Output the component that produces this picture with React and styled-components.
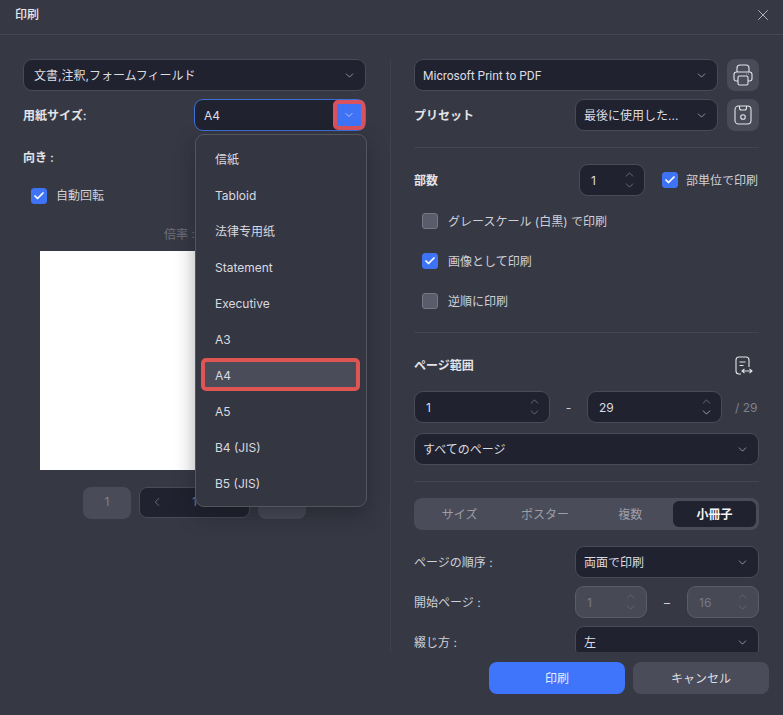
import React from "react";
import styled, { createGlobalStyle } from "styled-components";
import { ChevronDown, ChevronUp, ChevronLeft, Check, X } from "lucide-react";

const Global = createGlobalStyle`
  html, body { margin: 0; padding: 0; background: #363844; }
  *, *::before, *::after { box-sizing: border-box; }
`;

const Window = styled.div`
  width: 783px;
  height: 715px;
  display: flex;
  flex-direction: column;
  overflow: hidden;
  background: #363844;
  color: #d9dae0;
  font: 12px/1.4 Inter, "Noto Sans CJK JP", sans-serif;
`;
const Header = styled.header`
  height: 35px;
  flex: none;
  display: flex;
  align-items: center;
  justify-content: space-between;
  padding: 0 11px 4px 15px;
  border-bottom: 1px solid #454753;
`;
const Title = styled.h1`
  margin: 0;
  font-size: 12px;
  font-weight: 500;
  color: #e6e7ea;
`;
const Body = styled.div`
  flex: 1;
  min-height: 0;
  display: flex;
`;
const LeftPane = styled.section`
  position: relative;
  width: 390px;
  flex: none;
  padding: 24px 24px 0 23px;
`;
const RightPane = styled.section`
  flex: 1;
  min-width: 0;
  margin-top: 24px;
  padding: 0 24px 0 23px;
  border-left: 1px solid #3f414d;
  overflow: hidden;
`;
const Row = styled.div`
  display: flex;
  align-items: center;
  justify-content: space-between;
  gap: ${(p) => p.$gap ?? 9}px;
  margin-top: ${(p) => p.$top || 0}px;
`;
const RangeRow = styled.div`
  display: grid;
  grid-template-columns: 136px 37px 135px 1fr;
  align-items: center;
  justify-items: center;
  margin-top: 16px;
`;
const Group = styled.div`
  display: flex;
  align-items: center;
  gap: ${(p) => p.$gap || 9}px;
  padding-right: ${(p) => p.$pr || 0}px;
`;
const Label = styled.span`
  padding-top: 2px;
  font-weight: ${(p) => (p.$bold ? 600 : 400)};
  color: ${(p) => (p.$bold ? "#e3e4e8" : "#cfd0d6")};
`;
const Field = styled.div`
  height: 32px;
  flex: ${(p) => (p.$w ? "none" : 1)};
  width: ${(p) => (p.$w ? `${p.$w}px` : "auto")};
  display: flex;
  align-items: center;
  justify-content: space-between;
  padding: 0 ${(p) => (p.$active ? 1 : 9)}px 0 ${(p) => p.$pl || 8}px;
  border-radius: 9px;
  border: 1px solid ${(p) => (p.$active ? "#3e6fd8" : "#494b58")};
  background: #20222f;
  color: #dcdde2;
`;
const FieldText = styled.span`
  padding-top: 2px;
  font-family: ${(p) => (p.$latin ? "Roboto, sans-serif" : "inherit")};
`;
const Chevron = styled(ChevronDown)`
  color: #b4b5bd;
  flex: none;
`;
const ArrowButton = styled.div`
  width: 32px;
  height: 30px;
  margin-right: -1px;
  display: flex;
  align-items: center;
  justify-content: center;
  background: #3f73f6;
  border: 4px solid #d9525c;
  border-radius: 5px;
  color: #d7e2ff;
`;
const IconButton = styled.div`
  width: 32px;
  height: 32px;
  flex: none;
  display: flex;
  align-items: center;
  justify-content: center;
  border-radius: 8px;
  background: #494b58;
`;
const Check1 = styled.div`
  width: 16px;
  height: 16px;
  flex: none;
  display: flex;
  align-items: center;
  justify-content: center;
  border-radius: 3px;
  background: ${(p) => (p.$on ? "#3f73f6" : "#5a5c6b")};
  border: 1px solid ${(p) => (p.$on ? "#3f73f6" : "#767885")};
  color: #fff;
`;
const CheckRow = styled.label`
  height: 20px;
  display: flex;
  align-items: center;
  gap: ${(p) => p.$gap || 10}px;
  margin: ${(p) => p.$top || 0}px 0 0 ${(p) => p.$left ?? 8}px;
  color: #cfd0d6;
`;
const CheckText = styled.span`
  padding-top: 2px;
`;
const Divider = styled.hr`
  margin: ${(p) => p.$top || 16}px 0 0;
  border: 0;
  border-top: 1px solid #434551;
`;
const Spin = styled.div`
  height: 32px;
  width: ${(p) => (p.$w ? `${p.$w}px` : "auto")};
  flex: none;
  display: flex;
  align-items: center;
  justify-content: space-between;
  padding: 0 ${(p) => (p.$off ? 9 : 8)}px 0 11px;
  border-radius: 9px;
  border: 1px solid ${(p) => (p.$off ? "#5a5c69" : "#494b58")};
  background: ${(p) => (p.$off ? "#474955" : "#20222f")};
  color: ${(p) => (p.$off ? "#777985" : "#dcdde2")};
`;
const SpinArrows = styled.div`
  display: flex;
  flex-direction: column;
  color: ${(p) => (p.$off ? "#70727e" : "#8f909a")};
  svg { display: block; margin: -1px 0; }
  svg:last-child { color: ${(p) => (p.$hot ? "#e0e1e6" : "inherit")}; }
`;
const Muted = styled.span`
  justify-self: start;
  padding: 2px 0 0 13px;
  color: #7f818c;
`;
const Tabs = styled.div`
  height: 32px;
  margin-top: 16px;
  padding: 3px;
  display: grid;
  grid-template-columns: 1fr 1fr 1fr 83px;
  border-radius: 8px;
  background: #4a4c59;
`;
const Tab = styled.div`
  display: flex;
  align-items: center;
  justify-content: center;
  padding-top: 2px;
  border-radius: 6px;
  font-weight: ${(p) => (p.$on ? 700 : 400)};
  color: ${(p) => (p.$on ? "#f4f4f6" : "#9d9ea8")};
  background: ${(p) => (p.$on ? "#20222f" : "transparent")};
`;
const ControlCol = styled.div`
  width: 184px;
  flex: none;
  display: flex;
  align-items: center;
  justify-content: space-between;
`;
const Footer = styled.footer`
  height: 63px;
  flex: none;
  display: flex;
  justify-content: flex-end;
  gap: 8px;
  padding: 10px 14px 0 0;
`;
const Btn = styled.button`
  width: 136px;
  height: 32px;
  padding: 2px 0 0;
  border: 0;
  border-radius: 8px;
  font: inherit;
  color: ${(p) => (p.$primary ? "#e8eeff" : "#dcdde2")};
  background: ${(p) => (p.$primary ? "#3f75fb" : "#4a4c59")};
`;
const Preview = styled.div`
  width: 310px;
  height: 219px;
  margin: 7px 0 0 17px;
  background: #fff;
`;
const ZoomText = styled.div`
  margin-top: 21px;
  height: 17px;
  text-align: center;
  color: #6f717c;
`;
const Pager = styled.div`
  margin-top: 17px;
  display: flex;
  justify-content: center;
  gap: 8px;
`;
const PageBox = styled.div`
  width: 48px;
  height: 32px;
  display: flex;
  align-items: center;
  justify-content: center;
  border-radius: 8px;
  background: #494b58;
  color: #7f818c;
`;
const PageNav = styled.div`
  width: 111px;
  height: 31px;
  display: flex;
  align-items: center;
  justify-content: space-between;
  padding: 0 10px;
  border-radius: 8px;
  border: 1px solid #494b58;
  background: #20222f;
  color: #7f818c;
`;
const PrevIcon = styled(ChevronLeft)`
  transform: scaleX(${(p) => (p.$flip ? -1 : 1)});
`;
const Menu = styled.div`
  position: absolute;
  left: 195px;
  top: 99px;
  width: 172px;
  height: 373px;
  padding: 7px 6px 6px;
  border-radius: 9px;
  border: 1px solid #54565f;
  background: #343641;
  box-shadow: 0 8px 20px rgba(16, 17, 24, 0.35);
`;
const MenuItem = styled.div`
  position: relative;
  height: 36px;
  display: flex;
  align-items: center;
  padding-left: 13px;
  color: #d9dae0;
  ${(p) =>
    p.$marked &&
    `
    &::before {
      content: "";
      position: absolute;
      left: -1px;
      right: 0;
      top: 0;
      height: 33px;
      background: #4a4c59;
      border: 4px solid #de5553;
      border-radius: 5px;
    }
  `}
`;
const MenuText = styled.span`
  position: relative;
`;
const RangeWrap = styled.div`
  display: flex;
  margin-right: 6px;
`;

const PrinterIcon = () => (
  <svg width="20" height="22" viewBox="0 0 20 22" fill="none" stroke="#e4e5e9" strokeWidth="1.1">
    <path d="M4 8V4a3 3 0 0 1 3-3h6a3 3 0 0 1 3 3v4" />
    <path d="M5 17H3.500A2.500 2.500 0 0 1 1 14.500V10.500A2.500 2.500 0 0 1 3.500 8h13A2.500 2.500 0 0 1 19 10.500v4a2.500 2.500 0 0 1-2.500 2.500H15" />
    <rect x="5" y="12" width="10" height="9" rx="1.500" />
    <path d="M13 10h.6M15.200 10h.6" />
  </svg>
);
const SaveIcon = () => (
  <svg width="18" height="20" viewBox="0 0 18 20" fill="none" stroke="#e4e5e9" strokeWidth="1.1">
    <rect x="1" y="1" width="16" height="18" rx="3.500" />
    <path d="M5.500 1v2a2 2 0 0 0 2 2h3a2 2 0 0 0 2-2V1" />
    <circle cx="9" cy="12" r="2.300" />
  </svg>
);
const RangeIcon = () => (
  <svg width="18" height="19" viewBox="0 0 18 19" fill="none" stroke="#e4e5e9" strokeWidth="1.1">
    <path d="M6 18H4a3 3 0 0 1-3-3V4a3 3 0 0 1 3-3h7a3 3 0 0 1 3 3v7" />
    <path d="M4.500 6h6M4.500 9.500h4" />
    <path d="M7 15h10M9.500 12.800 7 15l2.500 2.200M14.500 12.800 17 15l-2.500 2.200" />
  </svg>
);

const Select = ({ children, w, pl, latin }) => (
  <Field $w={w} $pl={pl}>
    <FieldText $latin={latin}>{children}</FieldText>
    <Chevron size={13} strokeWidth={1.4} />
  </Field>
);
const Arrows = ({ off, hot }) => (
  <SpinArrows $off={off} $hot={hot}>
    <ChevronUp size={13} strokeWidth={1.2} />
    <ChevronDown size={13} strokeWidth={1.2} />
  </SpinArrows>
);
const Box = ({ on, size = 12 }) => (
  <Check1 $on={on}>{on && <Check size={size} strokeWidth={3.5} />}</Check1>
);

const sizes = ["信紙", "Tabloid", "法律专用纸", "Statement", "Executive", "A3", "A4", "A5", "B4 (JIS)", "B5 (JIS)"];

export default function App() {
  return (
    <Window>
      <Global />
      <Header>
        <Title>印刷</Title>
        <X size={18} strokeWidth={1.1} color="#c9cad0" />
      </Header>
      <Body>
        <LeftPane>
          <Select pl={10}>文書,注釈,フォームフィールド</Select>
          <Row $top={8}>
            <Label $bold>用紙サイズ:</Label>
            <Field $w={172} $active $pl={9}>
              <FieldText>A4</FieldText>
              <ArrowButton>
                <ChevronDown size={12} strokeWidth={1.5} />
              </ArrowButton>
            </Field>
          </Row>
          <Row $top={17}>
            <Label $bold>向き :</Label>
          </Row>
          <CheckRow $top={19} $gap={9}>
            <Box on />
            <CheckText>自動回転</CheckText>
          </CheckRow>
          <ZoomText>倍率 : 69%</ZoomText>
          <Preview />
          <Pager>
            <PageBox>1</PageBox>
            <PageNav>
              <PrevIcon size={14} strokeWidth={1.3} />
              <span>1</span>
              <PrevIcon $flip size={14} strokeWidth={1.3} />
            </PageNav>
            <PageBox>29</PageBox>
          </Pager>
          <Menu>
            {sizes.map((s) => (
              <MenuItem key={s} $marked={s === "A4"}>
                <MenuText>{s}</MenuText>
              </MenuItem>
            ))}
          </Menu>
        </LeftPane>
        <RightPane>
          <Row>
            <Select latin>Microsoft Print to PDF</Select>
            <IconButton>
              <PrinterIcon />
            </IconButton>
          </Row>
          <Row $top={8}>
            <Label $bold>プリセット</Label>
            <Group>
              <Select w={143}>最後に使用した...</Select>
              <IconButton>
                <SaveIcon />
              </IconButton>
            </Group>
          </Row>
          <Divider $top={16} />
          <Row $top={16}>
            <Label $bold>部数</Label>
            <Group $gap={17} $pr={1}>
              <Spin $w={66}>
                <FieldText>1</FieldText>
                <Arrows />
              </Spin>
              <CheckRow $left={0} $gap={8}>
                <Box on />
                <CheckText>部単位で印刷</CheckText>
              </CheckRow>
            </Group>
          </Row>
          <CheckRow $top={15}>
            <Box />
            <CheckText>グレースケール (白黒) で印刷</CheckText>
          </CheckRow>
          <CheckRow $top={20}>
            <Box on />
            <CheckText>画像として印刷</CheckText>
          </CheckRow>
          <CheckRow $top={20}>
            <Box />
            <CheckText>逆順に印刷</CheckText>
          </CheckRow>
          <Divider $top={21} />
          <Row $top={23}>
            <Label $bold>ページ範囲</Label>
            <RangeWrap>
              <RangeIcon />
            </RangeWrap>
          </Row>
          <RangeRow>
            <Spin $w={136}>
              <FieldText>1</FieldText>
              <Arrows />
            </Spin>
            <Label>-</Label>
            <Spin $w={135}>
              <FieldText>29</FieldText>
              <Arrows hot />
            </Spin>
            <Muted>/ 29</Muted>
          </RangeRow>
          <Row $top={10}>
            <Select>すべてのページ</Select>
          </Row>
          <Divider $top={16} />
          <Tabs>
            <Tab>サイズ</Tab>
            <Tab>ポスター</Tab>
            <Tab>複数</Tab>
            <Tab $on>小冊子</Tab>
          </Tabs>
          <Row $top={16}>
            <Label>ページの順序 :</Label>
            <ControlCol>
              <Select>両面で印刷</Select>
            </ControlCol>
          </Row>
          <Row $top={8}>
            <Label>開始ページ :</Label>
            <ControlCol>
              <Spin $off $w={72}>
                <FieldText>1</FieldText>
                <Arrows off />
              </Spin>
              <Label>–</Label>
              <Spin $off $w={72}>
                <FieldText>16</FieldText>
                <Arrows off />
              </Spin>
            </ControlCol>
          </Row>
          <Row $top={8}>
            <Label>綴じ方 :</Label>
            <ControlCol>
              <Select>左</Select>
            </ControlCol>
          </Row>
        </RightPane>
      </Body>
      <Footer>
        <Btn $primary>印刷</Btn>
        <Btn>キャンセル</Btn>
      </Footer>
    </Window>
  );
}
